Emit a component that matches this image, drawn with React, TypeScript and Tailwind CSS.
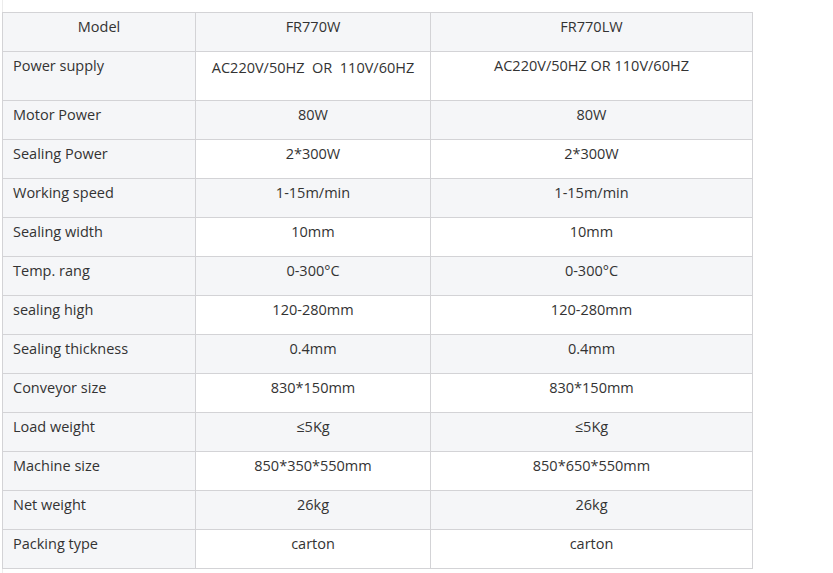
const rows: [string, string, string][] = [
  ["Power supply", "AC220V/50HZ\u00a0 OR\u00a0 110V/60HZ", "AC220V/50HZ OR 110V/60HZ"],
  ["Motor Power", "80W", "80W"],
  ["Sealing Power", "2*300W", "2*300W"],
  ["Working speed", "1-15m/min", "1-15m/min"],
  ["Sealing width", "10mm", "10mm"],
  ["Temp. rang", "0-300°C", "0-300°C"],
  ["sealing high", "120-280mm", "120-280mm"],
  ["Sealing thickness", "0.4mm", "0.4mm"],
  ["Conveyor size", "830*150mm", "830*150mm"],
  ["Load weight", "≤5Kg", "≤5Kg"],
  ["Machine size", "850*350*550mm", "850*650*550mm"],
  ["Net weight", "26kg", "26kg"],
  ["Packing type", "carton", "carton"],
];

const cell = "border border-[#d3d3d6] align-top px-[10px] pt-[3px]";

export default function App() {
  return (
    <div className="min-h-[573px] w-[833px] bg-white text-[14.5px] leading-[21px] text-[#333] [font-family:'Open_Sans',sans-serif]">
      <div className="ml-[2px] min-h-[573px] border-l border-[#ececec] pt-[12px]">
        <table className="-ml-px w-[750px] table-fixed border-collapse">
          <colgroup>
            <col className="w-[193px]" />
            <col className="w-[235px]" />
            <col className="w-[322px]" />
          </colgroup>
          <tbody>
            <tr className="bg-[#f5f6f8]">
              <td className={`${cell} h-[39px] text-center`}>Model</td>
              <td className={`${cell} h-[39px] text-center`}>FR770W</td>
              <td className={`${cell} h-[39px] text-center`}>FR770LW</td>
            </tr>
            {rows.map(([label, a, b], i) => (
              <tr key={label} className={i % 2 === 1 ? "bg-[#f5f6f8]" : "bg-white"}>
                <td className={`${cell} bg-[#f5f6f8] ${i === 0 ? "h-[49px]" : "h-[39px]"}`}>{label}</td>
                <td className={`${cell} text-center ${i === 0 ? "pt-[5px]" : ""}`}>{a}</td>
                <td className={`${cell} text-center`}>{b}</td>
              </tr>
            ))}
          </tbody>
        </table>
      </div>
    </div>
  );
}
